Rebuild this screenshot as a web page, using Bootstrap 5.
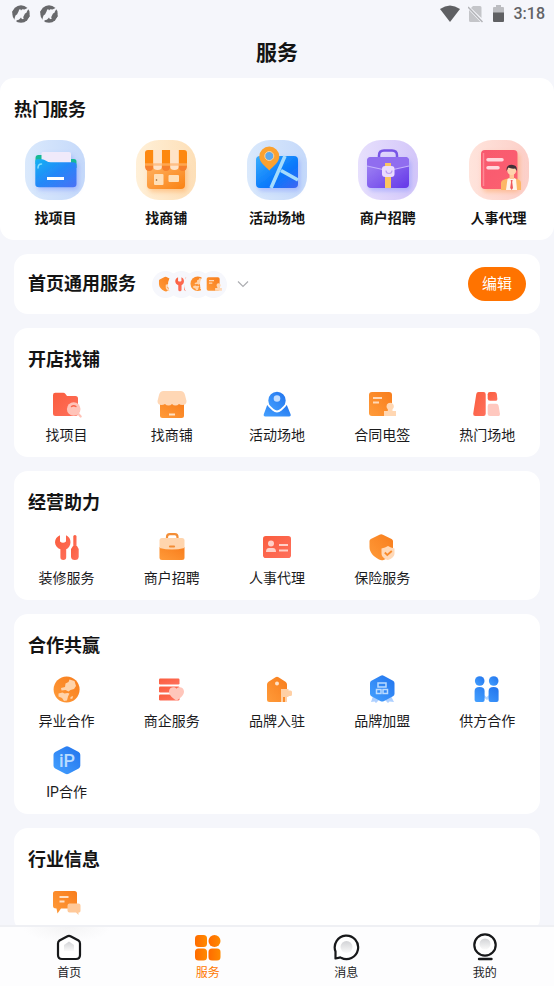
<!DOCTYPE html>
<html lang="zh-CN">
<head>
<meta charset="utf-8">
<meta name="viewport" content="width=device-width, initial-scale=1">
<title>服务</title>
<link href="https://cdn.jsdelivr.net/npm/bootstrap@5.3.0/dist/css/bootstrap.min.css" rel="stylesheet">
<style>
body{background:#f5f6fb;color:#1b1b1d;font-family:Roboto,"Noto Sans CJK SC",sans-serif;font-size:14px;line-height:20px}
a{color:inherit;text-decoration:none}
svg{display:block;flex:none}
main{scrollbar-width:none}
main::-webkit-scrollbar{display:none}
.status-bar{height:28px;padding:0 9px 0 11px;color:#626366;font-size:16px;font-weight:500}
.page-title{font-size:21px;font-weight:700;line-height:50px;color:#141414}
.page-stack{padding:14px;gap:14px}
.panel{background:#fff;border-radius:14px;padding:18px 0 12px}
.panel-title{font-size:18px;line-height:28px;font-weight:700;color:#141414;margin:0}
.panel .panel-title{padding-left:14px}
.hot-panel .panel-title{margin-bottom:16px}
.service-grid{margin-top:14px;row-gap:14px}
.tile{display:flex;flex-direction:column;align-items:center;gap:5px}
.hot-tile{gap:8px;font-weight:700;color:#141414}
.bar{background:#fff;border-radius:14px;padding:13px 14px}
.dot{width:27px;height:27px;border-radius:50%;background:#f6f7fc;display:flex;align-items:center;justify-content:center}
.dot+.dot{margin-left:-11px}
.edit-btn{background:#ff7300;color:#fff;border-radius:17px;font-size:15px;line-height:20px;padding:7px 14px}
.edit-btn:hover{background:#f06c00;color:#fff}
.tabs{background:radial-gradient(ellipse 44px 16px at 67px 0,#f4f4f5,#fdfdfe);border-top:2px solid #eff0f4;font-size:12px;line-height:18px;padding:6px 0 4px}
.tabs a{gap:3px}
.tabs .current{color:#ff7800}
</style>
<script src="https://cdn.jsdelivr.net/npm/bootstrap@5.3.0/dist/js/bootstrap.bundle.min.js"></script>
</head>
<body>
<svg width="0" height="0" class="position-absolute" aria-hidden="true">
<defs>
<linearGradient id="or" x1="1" y1="0" x2="0" y2="1"><stop stop-color="#f87d1c"/><stop offset="1" stop-color="#ff9b3a"/></linearGradient>
<linearGradient id="rd" x1="0" y1="0" x2="1" y2="1"><stop stop-color="#fa5d3e"/><stop offset="1" stop-color="#ff705c"/></linearGradient>
<linearGradient id="bl" x1="1" y1="0" x2="0" y2="1"><stop stop-color="#2173ed"/><stop offset="1" stop-color="#45a1ff"/></linearGradient>
<linearGradient id="bgBlue"><stop stop-color="#dae9fc"/><stop offset="1" stop-color="#c5d9fa"/></linearGradient>
<linearGradient id="bgOrange"><stop stop-color="#fff0d8"/><stop offset="1" stop-color="#fddfb7"/></linearGradient>
<linearGradient id="bgPurple"><stop stop-color="#e7e0fd"/><stop offset="1" stop-color="#d3c6f9"/></linearGradient>
<linearGradient id="bgRed"><stop stop-color="#ffe4dc"/><stop offset="1" stop-color="#fccfc8"/></linearGradient>
<linearGradient id="folder" x1="0" y1="0" x2="1" y2="1"><stop stop-color="#13b1f4"/><stop offset=".5" stop-color="#2488f8"/><stop offset="1" stop-color="#4a70f5"/></linearGradient>
<linearGradient id="shop" x1="0" y1="0" x2="1" y2="1"><stop stop-color="#ffb365"/><stop offset="1" stop-color="#fa8213"/></linearGradient>
<linearGradient id="mapf" x1="0" y1="0" x2="1" y2="1"><stop stop-color="#39aefd"/><stop offset=".6" stop-color="#0878fb"/><stop offset="1" stop-color="#4064f2"/></linearGradient>
<linearGradient id="bag" x1="0" y1="0" x2="1" y2="1"><stop stop-color="#a68bf4"/><stop offset="1" stop-color="#6337e8"/></linearGradient>
<linearGradient id="book" x1="0" y1="0" x2="1" y2="1"><stop stop-color="#f8596e"/><stop offset="1" stop-color="#fc6070"/></linearGradient>
<linearGradient id="tabg"><stop stop-color="#ff6b00"/><stop offset="1" stop-color="#ff8a00"/></linearGradient>
<linearGradient id="grey" x1="0" y1="0" x2="0" y2="1"><stop stop-color="#d2d3d6"/><stop offset="1" stop-color="#fafafa"/></linearGradient>
<filter id="soft" x="-30%" y="-30%" width="160%" height="180%"><feDropShadow dx="2" dy="3" stdDeviation="2.5" flood-color="#46f" flood-opacity=".3"/></filter>
<filter id="softWarm" x="-30%" y="-30%" width="160%" height="180%"><feDropShadow dx="2" dy="3" stdDeviation="2.5" flood-color="#f70" flood-opacity=".3"/></filter>
<symbol id="i-contract" viewBox="0 0 32 32"><rect x="3" y="4" width="23" height="24" rx="3" fill="url(#or)"/><path d="M7 10h9M7 14.500h6" stroke="#ffd9b8" stroke-width="2"/><path d="M20.500 18.500a3.700 3.700 0 1 1 6 2.800V23H30v5H18v-5h3.800v-1.700a3.700 3.700 0 0 1-1.300-2.800z" fill="#ffd7b3"/></symbol>
<symbol id="i-shield" viewBox="0 0 32 32"><path d="M13.500 3.700q1.700-1 3.400 0L25.600 8q1.400.8 1.400 2v7c0 6-4.500 10-9.500 12q-2.300.7-4.500-.5C7.500 25.500 3.500 21.500 3.500 16v-6q0-1.200 1.300-2z" fill="url(#or)"/><path d="M22 15l3 1.600 3.500.8v5c0 3-3 5.500-6.500 6.600-3.500-1-6.500-3.500-6.500-6.600v-5l3.500-.8z" fill="#ffd9b8"/><path d="M18.800 21.500l2.500 2.500 4.500-4" fill="none" stroke="#f88b2c" stroke-width="1.800"/></symbol>
<symbol id="i-tools" viewBox="0 0 32 32"><path d="M9 4.200v6.300q3 2.400 6 0V4.200c3 1.300 4.500 4 4.500 7 0 3.300-1.800 5.800-4.300 7.100v8q0 2.700-2.900 2.700t-2.900-2.700v-8C6.300 17 4 14.500 4 11.200c0-3 2-5.700 5-7z" fill="url(#rd)"/><rect x="22.300" y="4" width="3.200" height="13" rx="1.500" fill="url(#rd)"/><path d="M22 15h4l1.700 3v7.500q0 3.500-3.800 3.500T20 25.500V18z" fill="url(#rd)"/></symbol>
<symbol id="i-globe" viewBox="0 0 32 32"><circle cx="15.600" cy="15.500" r="13" fill="url(#or)"/><path d="M14.500 9.500l3-1.500 1-2.500 5 1.500 1.500 5-2 3-3.500 1-2 1.500-3-1.500-4 .5-.5-2.500 4-1zM7.500 19.500l4-1 2 1 3-.5 2 .5-1.500 3-1 4-3 .5-2-3-3.500-1.500zM19.500 23l2.500-1-.5 2.500-2 .5z" fill="#ffd3aa"/></symbol>
</defs>
</svg>
<div class="vh-100 d-flex flex-column">
<header class="flex-shrink-0">
<div class="status-bar d-flex align-items-center justify-content-between">
<div class="d-flex gap-2">
<svg width="20" height="20" viewBox="0 0 20 20"><g id="swirl"><circle cx="10" cy="10" r="8.700" fill="#68696c"/><path d="M13.500 5.500L18.500 3l-2.700 4.800L15 12l-3 3-5.500 1L2.500 18.500 4 13l1.500-4.500L9 5z" fill="#f5f6fb"/><path d="M8 6.500L4 4.500 1 8l3 3.500 2-1zM12 13.500l4 2 3-3.500-3-3.500-2 1z" fill="#68696c"/><path d="M7.500 2l6 .5L10 6.500zM12.500 18l-6-.5L10 13.500z" fill="#68696c"/></g></svg>
<svg width="20" height="20" viewBox="0 0 20 20"><use href="#swirl"/></svg>
</div>
<div class="d-flex align-items-center">
<svg width="20" height="18" viewBox="0 0 20 18"><path d="M0 4Q10-3 20 4L10 17z" fill="#5f6063"/></svg>
<svg class="ms-2" width="15" height="18" viewBox="0 0 15 18"><path d="M5 1h7q1.500 0 1.500 1.500V13L3 3zM1 5l11.500 12H2.500Q1 17 1 15.500z" fill="#c4c5c9"/><path d="M0 2l14.500 15" stroke="#b2b3b7" stroke-width="1.500"/></svg>
<svg class="ms-2" width="15" height="18" viewBox="0 0 15 18"><path d="M2 3q0-1 1-1h2V0h5v2h2q1 0 1 1v5H2z" fill="#bcbdc1"/><path d="M2 7.500h11V16q0 1-1 1H3q-1 0-1-1z" fill="#5f6063"/></svg>
<span class="ms-2">3:18</span>
</div>
</div>
<h1 class="page-title text-center m-0">服务</h1>
</header>
<main class="flex-grow-1 overflow-auto d-flex flex-column">
<section class="panel hot-panel flex-shrink-0">
<h2 class="panel-title">热门服务</h2>
<div class="row row-cols-5 g-0">
<a class="tile hot-tile col" href="#"><svg width="60" height="60" viewBox="0 0 60 60"><rect width="60" height="60" rx="23" fill="url(#bgBlue)"/><g filter="url(#soft)"><path d="M10.500 18q0-3 3-3H18v9h-7.500zM44 19h5q2.500 0 2.500 2.500V28H44z" fill="#12b995"/><path d="M16.500 13.500q0-1.500 1.500-1.500h26q2 0 2 2v12H16.500z" fill="#f0eafa"/><path d="M10.300 21q0-1.700 1.700-1.700h5q2 0 4 1.500t5 1.500h22q3.500 0 3.500 3V44q0 3.300-3.500 3.300H14q-3.700 0-3.700-3.300z" fill="url(#folder)"/></g><path d="M22 38.500h17" stroke="#fff" stroke-width="3"/><path d="M13 28q0-4 3.500-4" fill="none" stroke="#82ddff" stroke-width="1.500" stroke-linecap="round"/></svg>找项目</a>
<a class="tile hot-tile col" href="#"><svg width="60" height="60" viewBox="0 0 60 60"><rect width="60" height="60" rx="23" fill="url(#bgOrange)"/><g filter="url(#softWarm)"><path d="M11 24h38v21q0 4-4 4H15q-4 0-4-4z" fill="url(#shop)"/></g><path d="M9 26h8.400q0 5-4.200 5T9 26zM25.800 26h8.400q0 5-4.200 5t-4.200-5zM42.600 26H51q0 5-4.200 5t-4.200-5z" fill="#f6802d"/><path d="M12 10h5.400v16H9V13q0-3 3-3zM25.800 10h8.400v16h-8.400zM42.600 10H48q3 0 3 3v13h-8.400z" fill="#fd8810"/><path d="M17.400 10h8.400v17q0 3-4.200 3t-4.200-3zM34.200 10h8.400v17q0 3-4.200 3t-4.200-3z" fill="#ffe3c8"/><path d="M9 24.500h42" stroke="#ffb26d" stroke-width="2.500" opacity=".7"/><rect x="18" y="34" width="9.500" height="11" rx="1" fill="#ffdfb8"/><rect x="32.500" y="35" width="10.500" height="7" rx="1" fill="#ffdfb8"/><circle cx="20.500" cy="40" r=".8" fill="#8b562b"/></svg>找商铺</a>
<a class="tile hot-tile col" href="#"><svg width="60" height="60" viewBox="0 0 60 60"><rect width="60" height="60" rx="23" fill="url(#bgBlue)"/><rect x="9" y="16" width="42" height="32" rx="4" fill="url(#mapf)" filter="url(#soft)"/><path d="M24 48L38 16M34 30.500L51 40" stroke="#a5dcfd" stroke-width="3.500"/><path d="M22.300 30.500C18 26 12.300 22 12.300 16.500a10 10 0 0 1 20 0c0 5.500-5.700 9.500-10 14z" fill="#fba12f"/><circle cx="22.300" cy="16" r="4.500" fill="#5da8ec" stroke="#ffd49a" stroke-width="1"/></svg>活动场地</a>
<a class="tile hot-tile col" href="#"><svg width="60" height="60" viewBox="0 0 60 60"><rect width="60" height="60" rx="23" fill="url(#bgPurple)"/><path d="M21 19v-3.500q0-5 5-5h8q5 0 5 5V19" fill="none" stroke="#7855e6" stroke-width="2.500"/><rect x="9" y="17" width="42" height="31" rx="4" fill="url(#bag)" filter="url(#soft)"/><path d="M9 21q0-4 4-4h34q4 0 4 4v5Q40 28 33 30h-6Q18 28 9 26z" fill="#906def"/><path d="M9 26q9 2 18 4M51 26q-9 2-18 4" fill="none" stroke="#c5b2fb" stroke-width="1.200"/><path d="M27 23h6v25h-6z" fill="#fac660"/><rect x="24" y="26" width="12.500" height="11" rx="3" fill="#eadcff"/><path d="M28 30.500q0 3 3 3t3-3" fill="none" stroke="#bba0f2" stroke-width="1.200"/></svg>商户招聘</a>
<a class="tile hot-tile col" href="#"><svg width="60" height="60" viewBox="0 0 60 60"><rect width="60" height="60" rx="23" fill="url(#bgRed)"/><rect x="12" y="10" width="36.500" height="39" rx="4" fill="url(#book)" filter="url(#softWarm)"/><path d="M14.500 13v33" stroke="#ff8995" stroke-width="1.500"/><path d="M19 19.800h14M19 27.800h10" stroke="#ffd7dd" stroke-width="3.500" stroke-linecap="round"/><path d="M32 50V43q0-3 5-4l4-1h4l3 1q4 1 4 4v7z" fill="#fdb765"/><path d="M38.500 39l4-2 4.500 2 1 11H37z" fill="#fff5ed"/><path d="M41.700 40h2l-.5 2 .8 6-1.300 2-1.500-2 .8-6z" fill="#ef595e"/><rect x="40.500" y="33" width="4.500" height="6" fill="#ffc798"/><circle cx="42.700" cy="30.500" r="4.500" fill="#ffd3ad"/><path d="M37.700 31q-1-6 5-6.300 6 .3 5 6.300l-1.500-2.500q-4 .5-7-1z" fill="#3e3038"/></svg>人事代理</a>
</div>
</section>
<div class="page-stack d-flex flex-column flex-shrink-0">
<section class="bar d-flex align-items-center">
<h2 class="panel-title">首页通用服务</h2>
<div class="d-flex ms-3">
<span class="dot"><svg width="18" height="18"><use href="#i-shield"/></svg></span>
<span class="dot"><svg width="18" height="18"><use href="#i-tools"/></svg></span>
<span class="dot"><svg width="18" height="18"><use href="#i-globe"/></svg></span>
<span class="dot"><svg width="18" height="18"><use href="#i-contract"/></svg></span>
</div>
<svg class="ms-2" width="16" height="16" viewBox="0 0 16 16"><path d="M3 5.500l5 5 5-5" fill="none" stroke="#adaeb2" stroke-width="1.200"/></svg>
<button type="button" class="btn edit-btn border-0 ms-auto">编辑</button>
</section>
<section class="panel">
<h2 class="panel-title">开店找铺</h2>
<div class="row row-cols-5 g-0 service-grid">
<a class="tile col" href="#"><svg width="32" height="32"><path d="M2 7q0-2.300 2.300-2.300h8q1.300 0 2 1L16 8h8.500Q27 8 27 10.500v15Q27 28 24.500 28h-20Q2 28 2 25.500z" fill="url(#rd)"/><circle cx="22.700" cy="21" r="6.800" fill="#ffc3b8"/><path d="M27 25.500l2.700 3" stroke="#ffc3b8" stroke-width="2.200" stroke-linecap="round"/><path d="M20.500 18.500q2.200-1.700 4.400 0" fill="none" stroke="#fa664c" stroke-width="1.500" stroke-linecap="round"/></svg>找项目</a>
<a class="tile col" href="#"><svg width="32" height="32"><path d="M4 14h24v13.500q0 2.500-2.500 2.500h-19Q4 30 4 27.500z" fill="url(#or)"/><path d="M7.500 3h17Q28 3 29 7l1.500 6q0 4-4 4-2.500 0-3.500-1-1.500 1.500-3.500 1.500T16 16q-1.500 1.500-3.500 1.500T9 16q-1.500 1-3.500 1-4 0-4-4L3 7q1-4 4.500-4z" fill="#ffd7b5"/><path d="M13 26.500h6" stroke="#ffe0c4" stroke-width="2"/></svg>找商铺</a>
<a class="tile col" href="#"><svg width="32" height="32"><path d="M8 16h16q1.500 0 2 1.500l3.700 9q.5 2-1.500 2H4.200q-2 0-1.500-2l3.300-9Q6.500 16 8 16z" fill="url(#bl)"/><path d="M16 23.300Q13.500 23.300 9.500 18.500 7.300 15.500 7.300 12.500a8.700 8.700 0 0 1 17.400 0q0 3-2.200 6-4 4.800-6.500 4.800z" fill="url(#bl)"/><path d="M5.500 14.500Q9 19.500 12 21.800q4 3.300 8 0 3-2.300 6.500-7.300" fill="none" stroke="#fff" stroke-width="2"/><circle cx="16" cy="10.500" r="3.300" fill="#c2ddff"/></svg>活动场地</a>
<a class="tile col" href="#"><svg width="32" height="32"><use href="#i-contract"/></svg>合同电签</a>
<a class="tile col" href="#"><svg width="32" height="32"><path d="M7.500 4h5q2.200 0 2.200 2.200v19.600q0 2.200-2.200 2.200H4.300Q2 28 2.200 25.800L5.300 6q.3-2 2.200-2z" fill="url(#rd)"/><path d="M19 4h4.500q2 0 2.300 2l.5 4.200q.3 2.600-2 2.600h-5.200q-2.400 0-2.400-2.400V6.200Q16.700 4 19 4z" fill="url(#rd)"/><path d="M19 15.700h6.200q2 0 2.400 2l1.300 7.700q.4 2.600-2.200 2.600H19q-2.300 0-2.300-2.300V18q0-2.300 2.300-2.300z" fill="#ffc8bf"/></svg>热门场地</a>
</div>
</section>
<section class="panel">
<h2 class="panel-title">经营助力</h2>
<div class="row row-cols-5 g-0 service-grid">
<a class="tile col" href="#"><svg width="32" height="32"><use href="#i-tools"/></svg>装修服务</a>
<a class="tile col" href="#"><svg width="32" height="32"><path d="M11 8V6q0-2.800 2.800-2.800h5Q21.500 3.200 21.500 6v2" fill="none" stroke="#f38d36" stroke-width="2.200"/><path d="M3.500 16h25v10.500q0 2.500-2.500 2.500H6q-2.500 0-2.500-2.500z" fill="url(#or)"/><path d="M3.500 9.500Q3.500 7 6 7h20q2.500 0 2.500 2.500V17q-12.500 3-25 0z" fill="#ffd5ae"/><path d="M14 15.500h4" stroke="#f38d36" stroke-width="2.200" stroke-linecap="round"/></svg>商户招聘</a>
<a class="tile col" href="#"><svg width="32" height="32"><rect x="2" y="5" width="28" height="22" rx="2.800" fill="url(#rd)"/><g fill="#ffd0c7"><circle cx="10" cy="12.500" r="3"/><path d="M5 21q0-4 3-4h4q3 0 3 4zM18 13h9v2h-9zM18 18.500h9v2h-9z"/></g></svg>人事代理</a>
<a class="tile col" href="#"><svg width="32" height="32"><use href="#i-shield"/></svg>保险服务</a>
</div>
</section>
<section class="panel">
<h2 class="panel-title">合作共赢</h2>
<div class="row row-cols-5 g-0 service-grid">
<a class="tile col" href="#"><svg width="32" height="32"><use href="#i-globe"/></svg>异业合作</a>
<a class="tile col" href="#"><svg width="32" height="32"><g fill="url(#rd)"><rect x="3" y="4.500" width="20.500" height="6" rx="1.200"/><rect x="3" y="12.500" width="20.500" height="6" rx="1.200"/><rect x="3" y="20.500" width="20.500" height="6" rx="1.200"/></g><path d="M20.500 26.500C17 24.500 13 21.500 13 17.500c0-4 5-5.500 7.500-2.800 2.500-2.700 7.500-1.200 7.500 2.800 0 4-4 7-7.500 9z" fill="#ffc6bb"/></svg>商企服务</a>
<a class="tile col" href="#"><svg width="32" height="32"><path d="M14.500 3.200q1.500-1 3 0l7 4.500Q26 8.700 26 10.500V28H8.500Q6 28 6 25.500v-15q0-1.800 1.500-2.800z" fill="url(#or)"/><circle cx="16" cy="9.500" r="2" fill="#ffe2c7"/><path d="M20 15h7.500v1.500h2Q31 16.500 31 18v2.500q0 1.500-1.500 1.500h-2v1H26v5h-2v-5h-2v5h-2z" fill="#ffd0a5"/></svg>品牌入驻</a>
<a class="tile col" href="#"><svg width="32" height="32"><path d="M7 22l6 4-3 3-1.500-1.500L5 28zM25 22l-6 4 3 3 1.500-1.500L28 28z" fill="#aed0ff"/><path d="M14.700 1.700q1.500-.9 3 0l9.300 5q1.500.8 1.500 2.500v10.500q0 1.700-1.500 2.500l-9.300 5q-1.500.8-3 0l-9.300-5Q4 21.400 4 19.700V9.200q0-1.700 1.400-2.500z" fill="url(#bl)"/><path d="M12 9h8v4h-8zM10.500 15.500h4.500v4h-4.500zM17 15.500h4.500v4H17z" fill="none" stroke="#bbdbff" stroke-width="1.500"/></svg>品牌加盟</a>
<a class="tile col" href="#"><svg width="32" height="32"><path d="M12 20l3.500 3 4-3v3L16 26l-4-3z" fill="#b3d5ff"/><g fill="url(#bl)"><circle cx="8.700" cy="7" r="4.800"/><circle cx="22.700" cy="7" r="4.800"/><path d="M3.600 17q0-4 5-4t5 4v9q0 2-2 2h-6q-2 0-2-2zM17.600 17q0-4 5-4t5 4v9q0 2-2 2h-6q-2 0-2-2z"/></g></svg>供方合作</a>
<a class="tile col" href="#"><svg width="32" height="32"><path d="M14.300 1.700q1.700-1 3.400 0L27.700 7q1.600 1 1.600 2.700v11q0 1.800-1.600 2.700l-10 5.400q-1.700.9-3.400 0L4.200 23.400q-1.700-.9-1.700-2.700v-11Q2.500 8 4.200 7z" fill="url(#bl)"/><text x="16" y="22" text-anchor="middle" font-size="18" font-weight="500" fill="#b9dcff">iP</text></svg>IP合作</a>
</div>
</section>
<section class="panel">
<h2 class="panel-title">行业信息</h2>
<div class="row row-cols-5 g-0 service-grid">
<a class="tile col" href="#" aria-label="行业信息"><svg width="32" height="32"><path d="M4.500 3h19Q26 3 26 5.500V18q0 2.500-2.500 2.500H10L6.500 25.500l-1-5Q2 20.500 2 18V5.500Q2 3 4.500 3z" fill="url(#or)"/><path d="M8.500 9h9M8.500 13.500h5" stroke="#ffe0c4" stroke-width="2"/><path d="M18.500 15.500h9q2 0 2 2V23q0 1.500-2 1.500v2.500L25 24.500h-6.500q-2 0-2-2v-5q0-2 2-2z" fill="#ffc999"/></svg></a>
</div>
</section>
</div>
</main>
<nav class="tabs d-flex flex-shrink-0">
<a class="d-flex flex-column align-items-center flex-fill w-25" href="#"><svg width="28" height="28" viewBox="0 0 28 28"><path d="M12 3.500q2-1.100 4 0l7.500 4Q25 8.500 25 10.500V22q0 4-4 4H7q-4 0-4-4V10.500q0-2 1.500-3z" fill="#fff" stroke="#17181a" stroke-width="2.200"/><path d="M9 12l5-3.500 5 3.500v6H9z" fill="url(#grey)"/></svg>首页</a>
<a class="current d-flex flex-column align-items-center flex-fill w-25" href="#" aria-current="page"><svg width="28" height="28" viewBox="0 0 28 28"><g fill="url(#tabg)"><rect x="1" y="2" width="12" height="12" rx="3.500"/><circle cx="20.500" cy="8" r="6"/><rect x="1" y="15.500" width="12" height="12" rx="3.500"/><rect x="14.500" y="15.500" width="12" height="12" rx="3.500"/></g></svg>服务</a>
<a class="d-flex flex-column align-items-center flex-fill w-25" href="#"><svg width="28" height="28" viewBox="0 0 28 28"><path d="M3.500 25.500V18.500a11.700 11.700 0 1 1 5.500 6.200q-.8-.5-1.500 0z" fill="#fff" stroke="#17181a" stroke-width="2.200" stroke-linejoin="round"/><circle cx="14.500" cy="14" r="6" fill="url(#grey)"/></svg>消息</a>
<a class="d-flex flex-column align-items-center flex-fill w-25" href="#"><svg width="28" height="28" viewBox="0 0 28 28"><circle cx="14" cy="12" r="10.700" fill="#fff" stroke="#17181a" stroke-width="2.200"/><circle cx="14" cy="11" r="5.500" fill="url(#grey)"/><path d="M8 26h12.500" stroke="#17181a" stroke-width="2.400" stroke-linecap="round"/></svg>我的</a>
</nav>
</div>
</body>
</html>
